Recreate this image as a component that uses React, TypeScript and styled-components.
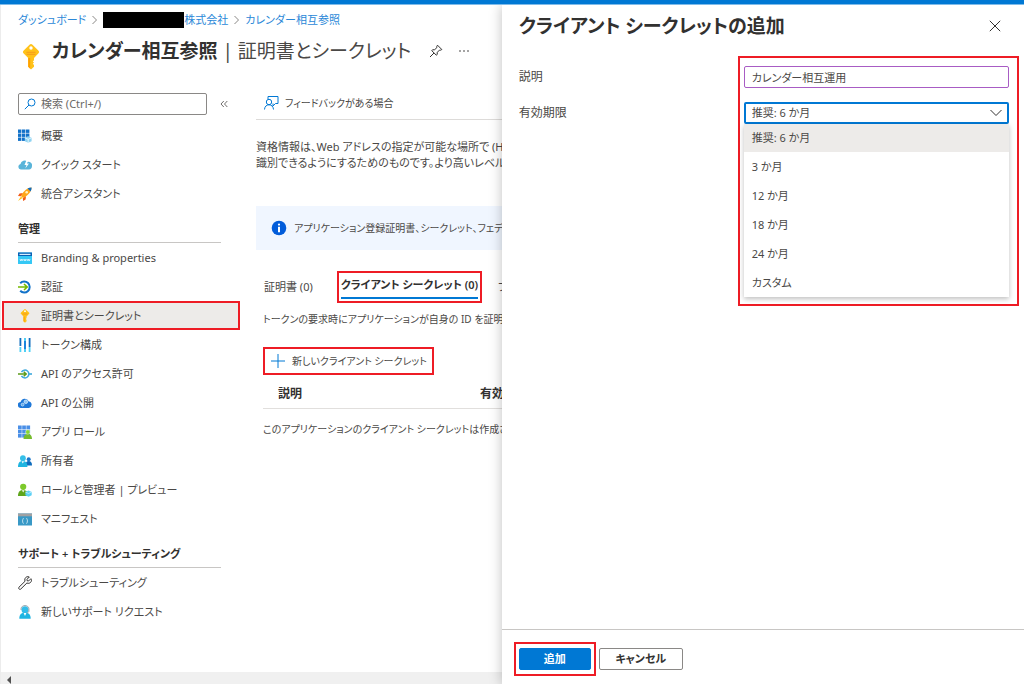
import React from "react";
import styled, { createGlobalStyle, css } from "styled-components";

const GlobalStyle = createGlobalStyle`
  *, *::before, *::after { box-sizing: border-box; }
  body {
    margin: 0;
    background: #fff;
    color: #4a4846;
    font-family: "Noto Sans", "Noto Sans CJK JP", sans-serif;
    font-size: 11px;
    line-height: 16px;
    font-feature-settings: "palt";
  }
  button, input, select {
    font: inherit;
    font-feature-settings: inherit;
    color: inherit;
  }
  ul, ol { list-style: none; margin: 0; padding: 0; }
  h1, h2, h3, p { margin: 0; }
`;

const RED = "#ee1c25";
const BLUE = "#0078d4";

const frame = css`
  border: 2px solid ${RED};
`;

const Page = styled.div`
  display: flex;
  flex-direction: column;
  height: 100vh;
  overflow: hidden;
`;

const TopBar = styled.div`
  flex: none;
  height: 5px;
  background: ${BLUE};
  border-bottom: 1px solid #7fbbe9;
`;

const Split = styled.div`
  flex: 1;
  min-height: 0;
  display: grid;
  grid-template-columns: 49fr 51fr;
`;

/* ---------- blade ---------- */

const Blade = styled.main`
  min-width: 0;
  display: flex;
  flex-direction: column;
  overflow: hidden;
  white-space: nowrap;
  border-left: 1px solid #ececec;
`;

const Breadcrumb = styled.nav`
  padding: 7px 0 0 17px;
  ol { display: flex; align-items: center; gap: 5px; }
  li { display: flex; align-items: center; gap: 5px; }
  a { color: #2b88d8; text-decoration: none; display: flex; align-items: center; }
`;

const Redacted = styled.span`
  width: 81px;
  height: 16px;
  background: #000;
`;

const TitleRow = styled.header`
  display: flex;
  align-items: center;
  gap: 10px;
  height: 40px;
  padding: 5px 0 0 19px;
  > svg { margin-top: 12px; }
`;

const Title = styled.h1`
  font-size: 19px;
  line-height: 28px;
  font-weight: 400;
  strong { font-weight: 600; color: #323130; }
`;

const IconButton = styled.button`
  display: flex;
  align-items: center;
  justify-content: center;
  width: 20px;
  height: 20px;
  padding: 0;
  border: 0;
  background: none;
`;

const TitleActions = styled.div`
  display: flex;
  gap: 8px;
  margin-left: 5px;
`;

const BladeBody = styled.div`
  flex: 1;
  min-height: 0;
  display: flex;
  gap: 16px;
  padding-top: 25px;
`;

const Sidebar = styled.nav`
  flex: none;
  width: 239px;
  padding-left: 1px;
`;

const SearchRow = styled.div`
  display: flex;
  align-items: center;
  gap: 7px;
  padding-left: 16px;
  margin-bottom: 6px;
`;

const SearchBox = styled.label`
  display: flex;
  align-items: center;
  gap: 5px;
  width: 189px;
  height: 22px;
  padding: 0 5px;
  border: 1px solid #8a8886;
  border-radius: 2px;
  input {
    flex: 1;
    min-width: 0;
    padding: 0;
    border: 0;
    outline: 0;
    background: none;
  }
  input::placeholder { color: #6b6967; opacity: 1; }
`;

const NavItem = styled.a<{ $selected?: boolean }>`
  display: flex;
  align-items: center;
  gap: 9px;
  height: 29px;
  padding-left: 16px;
  color: inherit;
  text-decoration: none;
  ${(p) =>
    p.$selected &&
    css`
      ${frame}
      background: #edebe9;
      padding-left: 14px;
    `}
  svg { flex: none; }
`;

const NavHeading = styled.h2`
  height: 35px;
  margin: 0 19px 0 16px;
  padding-top: 13px;
  border-bottom: 1px solid #c8c6c4;
  font-size: 11px;
  line-height: 16px;
  font-weight: 600;
  color: #323130;
`;

const Content = styled.section`
  flex: 1 0 480px;
`;

const CommandBar = styled.div`
  display: flex;
  align-items: center;
  height: 27px;
  padding: 0 0 6px 7px;
  border-bottom: 1px solid #dddbd9;
`;

const Command = styled.button`
  display: flex;
  align-items: center;
  gap: 6px;
  height: 20px;
  padding: 0;
  border: 0;
  background: none;
  font-size: 10px;
`;

const Intro = styled.p`
  padding-top: 19px;
`;

const InfoBanner = styled.div`
  display: flex;
  align-items: center;
  gap: 7px;
  height: 44px;
  margin: 35px 0 21px;
  padding-left: 15px;
  background: #f0f6ff;
  font-size: 10px;
`;

const Tabs = styled.div`
  display: flex;
  align-items: center;
  gap: 16px;
  padding-left: 8px;
`;

const Tab = styled.button<{ $active?: boolean }>`
  height: 28px;
  padding: 0;
  border: 0;
  background: none;
  ${(p) =>
    p.$active &&
    css`
      height: 26px;
      border-bottom: 2px solid ${BLUE};
      font-weight: 600;
      color: #323130;
    `}
`;

const TabFrame = styled.div`
  ${frame}
  height: 32px;
  margin-left: 8px;
  padding: 0 2px;
`;

const TabPanel = styled.div`
  padding: 8px 0 0 7px;
  font-size: 10px;
`;

const AddCommand = styled(Command)`
  ${frame}
  height: 28px;
  margin: 20px 0 6px;
  padding: 0 5px;
`;

const SecretTable = styled.table`
  width: 100%;
  border-collapse: collapse;
  text-align: left;
  th {
    height: 27px;
    padding: 0 0 0 15px;
    border-bottom: 1px solid #e1dfdd;
    font-size: 12px;
    font-weight: 600;
    color: #323130;
  }
  th:first-child { width: 202px; }
  td { height: 42px; padding: 0; }
`;

const ScrollTrack = styled.div`
  flex: none;
  display: flex;
  align-items: center;
  height: 12px;
  padding: 3px 0 0 5px;
  background: #f0f0f0;
`;

/* ---------- context pane ---------- */

const Pane = styled.aside`
  position: relative;
  min-width: 0;
  display: flex;
  flex-direction: column;
  background: #fff;
  box-shadow: 0 0 12px rgba(0, 0, 0, 0.25);
  clip-path: inset(0 0 0 -16px);
`;

const PaneHeader = styled.header`
  display: flex;
  align-items: center;
  justify-content: space-between;
  height: 41px;
  padding: 0 19px 0 17px;
  h2 {
    font-size: 19px;
    line-height: 28px;
    font-weight: 600;
    color: #323130;
  }
`;

const Form = styled.form`
  flex: 1;
  display: grid;
  grid-template-columns: 225px 1fr;
  grid-template-rows: 22px 22px auto;
  row-gap: 14px;
  padding: 20px 15px 0 17px;
`;

const FormLabel = styled.label<{ $row: number }>`
  grid-area: ${(p) => p.$row} / 1;
  font-size: 12px;
  line-height: 22px;
`;

const TextField = styled.input`
  grid-area: 1 / 2;
  width: 100%;
  height: 22px;
  padding: 0 7px;
  border: 1px solid #a85cc4;
  border-radius: 2px;
  outline: 0;
`;

const SelectWrap = styled.div`
  grid-area: 2 / 2;
  position: relative;
  height: 22px;
`;

const SelectField = styled.div`
  height: 22px;
  display: grid;
  align-items: center;
  select, svg { grid-area: 1 / 1; }
  svg { justify-self: end; margin-right: 7px; pointer-events: none; }
  select {
    appearance: none;
    width: 100%;
    height: 22px;
    padding: 0 6px;
    border: 2px solid ${BLUE};
    border-radius: 2px;
    background: #fff;
    outline: 0;
  }
`;

const Options = styled.ul`
  position: absolute;
  top: 100%;
  left: 0;
  right: 0;
  background: #fff;
  box-shadow: 0 2px 5px rgba(0, 0, 0, 0.25);
`;

const Option = styled.li`
  padding: 0 8px;
  line-height: 29px;
  &[aria-selected="true"] {
    background: #edebe9;
    line-height: 28px;
  }
`;

const FieldFrame = styled.div`
  ${frame}
  grid-area: 1 / 2 / 4 / 3;
  height: 250px;
  margin: -10px -10px 0 -6px;
  pointer-events: none;
`;

const PaneFooter = styled.footer`
  display: flex;
  align-items: center;
  gap: 3px;
  height: 55px;
  padding: 3px 12px 0;
  border-top: 1px solid #c8c6c4;
`;

const ButtonFrame = styled.div`
  ${frame}
  display: flex;
  padding: 4px 3px;
`;

const Button = styled.button<{ $primary?: boolean }>`
  min-width: ${(p) => (p.$primary ? 72 : 84)}px;
  height: 22px;
  padding: 0 8px;
  line-height: 16px;
  font-weight: 600;
  border-radius: 2px;
  border: 1px solid ${(p) => (p.$primary ? BLUE : "#8a8886")};
  background: ${(p) => (p.$primary ? BLUE : "#fff")};
  color: ${(p) => (p.$primary ? "#fff" : "#323130")};
`;

/* ---------- icons ---------- */

const Svg = ({ s = 14, h, children }: { s?: number; h?: number; children: React.ReactNode }) => (
  <svg width={s} height={h ?? s} viewBox={`0 0 ${s} ${h ?? s}`} fill="none" aria-hidden="true">
    {children}
  </svg>
);

const Chevron = () => (
  <Svg s={7} h={10}>
    <path d="M1.5 1 5.500 5l-4 4" stroke="#8a8886" />
  </Svg>
);

const KeyIcon = ({ w, h }: { w: number; h: number }) => (
  <svg width={w} height={h} viewBox="0 0 22 26" fill="none" aria-hidden="true">
    <path d="M9.500.8a2.200 2.200 0 0 1 3 0l5.800 5.600a2.200 2.200 0 0 1 0 3.100L14 13.900v2.300l-1.200 1.200 1.200 1.200-1.200 1.200 1.200 1.200v1.700L11 25.600l-2.800-2.900v-8.800L3.700 9.500a2.200 2.200 0 0 1 0-3.100z" fill="#ffc21a" />
    <path d="M8.200 14h2v10.700l-2-2z" fill="#ffa200" />
    <path d="M6.500 8.300h9M6.500 10.300h9" stroke="#f59a1c" />
    <circle cx="11" cy="4" r="1.700" fill="#fff" />
  </svg>
);

const OverviewIcon = () => (
  <Svg>
    {[0, 4, 8].map((x) =>
      [0.5, 4.5, 8.5].map((y) => (
        <rect key={`${x}-${y}`} x={x} y={y} width="3.400" height="3.400" fill="#1272c9" />
      ))
    )}
    <path d="M10.200 7.300 13.600 8.800v3.400l-3.400 1.500-3.400-1.500V8.800z" fill="#8fd3f2" />
    <path d="M6.800 8.800l3.400 1.500 3.400-1.500M10.200 10.300v3.400" stroke="#fff" strokeWidth=".7" />
  </Svg>
);

const QuickIcon = () => (
  <Svg>
    <path d="M2.800 11.500A2.800 2.800 0 0 1 2.500 6 4 4 0 0 1 9.500 4 3.500 3.500 0 0 1 14 8c0 2-1.300 3.500-3 3.500z" fill="#59b4d9" />
    <path d="M8.500 2 6.500 7h2L7.300 10.500 11 5.600H9L10.500 2z" fill="#fff" />
  </Svg>
);

const RocketIcon = () => (
  <Svg>
    <path d="M5 6 1.500 6.500 0 9l3 .3zM8 9l-.4 3.500-2.500 1.500-.3-3z" fill="#f25c1a" />
    <path d="M13.600.5C9 .8 5.500 4 3 9l2 2c5-2.500 8.300-6 8.600-10.500z" fill="#ffa61a" />
    <path d="M3 9.500 0 14l4.500-3z" fill="#ffc21a" />
    <path d="M13.600.5c-1.600 0-3 .4-4.100 1l3.100 3.100c.6-1.200 1-2.500 1-4.100z" fill="#0f6cbd" />
    <circle cx="8.700" cy="5.300" r="1.300" fill="#fff2c4" />
  </Svg>
);

const BrandingIcon = () => (
  <Svg>
    <rect y="1.500" width="14" height="11.500" rx=".5" fill="#35c8f5" />
    <path d="M0 1.500h14V5H0z" fill="#0a62b5" />
    <path d="M1.500 2.800h11v1.200h-11z" fill="#d7ecfb" />
    <path d="M2 8l.7 2 .7-2 .7 2 .7-2M5.600 8l.7 2 .7-2 .7 2 .7-2M9.200 8l.7 2 .7-2 .7 2 .7-2" stroke="#fff" strokeWidth=".6" />
  </Svg>
);

const AuthIcon = () => (
  <Svg>
    <path d="M2.200 3.200A5.500 5.500 0 1 1 2.200 10.800" stroke="#1272c9" strokeWidth="2" />
    <path d="M0 7h8.500M6 4l3.200 3L6 10" stroke="#76b900" strokeWidth="1.600" />
  </Svg>
);

const TokenIcon = () => (
  <Svg>
    <rect x="1.500" y="0" width="1.800" height="8" fill="#0f6cbd" />
    <rect x="1.500" y="9" width="1.800" height="5" fill="#4fd0f5" />
    <rect x="6" y="0" width="2" height="3.500" fill="#4fd0f5" />
    <rect x="6" y="3" width="2" height="8" fill="#1b84dd" />
    <rect x="6" y="11" width="2" height="3" fill="#4fd0f5" />
    <rect x="10.700" y="0" width="1.800" height="9" fill="#0f6cbd" />
    <rect x="10.700" y="9" width="1.800" height="5" fill="#4fd0f5" />
  </Svg>
);

const ApiPermIcon = () => (
  <Svg>
    <path d="M3.500 5.200a3.900 3.900 0 1 1 0 3.600" stroke="#3fa9dd" strokeWidth="1.500" />
    <path d="M11 7h3" stroke="#3fa9dd" strokeWidth="1.600" />
    <path d="M0 7h7.500M5.700 4.800 8.200 7 5.700 9.200" stroke="#5b9a1a" strokeWidth="1.500" />
  </Svg>
);

const ApiCloudIcon = () => (
  <Svg>
    <path d="M3 12A3 3 0 0 1 2.600 6 4.300 4.300 0 0 1 10.800 5.500 3.300 3.300 0 0 1 11 12z" fill="#1f78d8" />
    <circle cx="7.800" cy="5.800" r="1.800" fill="#8fc6f5" stroke="#e5f3fd" strokeWidth=".7" />
    <circle cx="4.600" cy="8.600" r="1.400" fill="#5aa7ea" stroke="#e5f3fd" strokeWidth=".7" />
  </Svg>
);

const AppRoleIcon = () => (
  <Svg>
    {[0, 4.2, 8.4].map((x) =>
      [0.5, 4.7, 8.9].map((y) => (
        <rect key={`${x}-${y}`} x={x} y={y} width="3.700" height="3.700" fill="#4a8fe7" />
      ))
    )}
    <path d="M5.500 14c0-3.500 1.700-5 4.300-5s4.200 1.500 4.200 5z" fill="#76bc2d" />
    <circle cx="9.800" cy="7" r="2.200" fill="#86d633" stroke="#fff" strokeWidth=".4" />
  </Svg>
);

const OwnersIcon = () => (
  <Svg>
    <path d="M7.500 11.500c0-3 1-4.500 3.200-4.500S14 8.500 14 11.500z" fill="#0f6cbd" />
    <circle cx="10.700" cy="5.300" r="2" fill="#1a78cc" />
    <path d="M0 13c0-4 1.500-6 4.700-6s4.700 2 4.700 6z" fill="#1fb4e0" />
    <circle cx="4.900" cy="4.200" r="2.900" fill="#35bfe8" />
    <path d="M3.600 7.200h2.400L4.800 9.500z" fill="#fff" />
  </Svg>
);

const RolesIcon = () => (
  <Svg>
    <path d="M0 13c0-4 1.800-6 5-6s5 2 5 6z" fill="#5ea51c" />
    <circle cx="5.200" cy="3.800" r="3.100" fill="#7cc92a" />
    <path d="M3.900 7.200h2.500L5.200 9.500z" fill="#fff" />
    <path d="M10.500 7.500 13.700 9v3.300l-3.200 1.500-3.100-1.500V9z" fill="#5cd0f5" />
    <path d="M7.400 9l3.100 1.400L13.700 9" stroke="#d3f2fd" strokeWidth=".7" />
  </Svg>
);

const ManifestIcon = () => (
  <Svg>
    <path d="M0 1.500h14v12H0z" fill="#3999c6" />
    <path d="M0 1.500h14v2.800H0z" fill="#a0a1a2" />
    <path d="M5.600 6.500c-1 0-.8.600-.8 1.300s-.2 1-.7 1.100c.5.100.7.500.7 1.200s-.2 1.300.8 1.300M8.400 6.500c1 0 .8.600.8 1.300s.2 1 .7 1.100c-.5.100-.7.500-.7 1.200s.2 1.300-.8 1.300" stroke="#e5f3fa" strokeWidth=".8" />
  </Svg>
);

const WrenchIcon = () => (
  <Svg>
    <path d="M12.900 2.700 10.700 4.900 9.200 4.800 9 3.300 11.300 1C9.500.2 7.600 1 7 2.600c-.4 1-.2 2 .1 2.600L.9 11.300c-1 1 .8 2.800 1.800 1.800L8.900 7c1.700.8 3.600.1 4.300-1.500.4-1 .3-2-.3-2.800z" stroke="#323130" strokeLinejoin="round" />
  </Svg>
);

const SupportIcon = () => (
  <Svg>
    <path d="M1.300 13.800c0-4.200 1.900-6.300 5.700-6.300s5.700 2.100 5.700 6.300z" fill="#1eb5e2" />
    <circle cx="7" cy="4.800" r="3.500" fill="#32bdea" />
    <path d="M3.100 5V3.500C3.400 1.600 5 .6 7 .6s3.600 1 3.900 3V6c0 1.200-1 1.700-2 1.900" stroke="#8a9aa3" strokeWidth=".9" />
    <path d="M5.600 8h2.800L7 11z" fill="#fff" />
  </Svg>
);

const FeedbackIcon = () => (
  <Svg s={16}>
    <path d="M5 4V1.500h10v7h-2.500L10 11V8.500" stroke={BLUE} />
    <circle cx="6" cy="7" r="2.700" stroke={BLUE} />
    <path d="M1.500 14.500C1.700 11.500 3.500 9.800 6 9.800s4.300 1.700 4.500 4.700" stroke={BLUE} />
  </Svg>
);

const general = [
  { icon: <OverviewIcon />, label: "概要" },
  { icon: <QuickIcon />, label: "クイック スタート" },
  { icon: <RocketIcon />, label: "統合アシスタント" },
];

const manage = [
  { icon: <BrandingIcon />, label: "Branding & properties" },
  { icon: <AuthIcon />, label: "認証" },
  { icon: <KeyIcon w={14} h={14} />, label: "証明書とシークレット", selected: true },
  { icon: <TokenIcon />, label: "トークン構成" },
  { icon: <ApiPermIcon />, label: "API のアクセス許可" },
  { icon: <ApiCloudIcon />, label: "API の公開" },
  { icon: <AppRoleIcon />, label: "アプリ ロール" },
  { icon: <OwnersIcon />, label: "所有者" },
  { icon: <RolesIcon />, label: "ロールと管理者 | プレビュー" },
  { icon: <ManifestIcon />, label: "マニフェスト" },
];

const support = [
  { icon: <WrenchIcon />, label: "トラブルシューティング" },
  { icon: <SupportIcon />, label: "新しいサポート リクエスト" },
];

type Item = { icon: React.ReactNode; label: string; selected?: boolean };

const NavList = ({ items }: { items: Item[] }) => (
  <ul>
    {items.map((it) => (
      <li key={it.label}>
        <NavItem href="#" $selected={it.selected} aria-current={it.selected ? "page" : undefined}>
          {it.icon}
          {it.label}
        </NavItem>
      </li>
    ))}
  </ul>
);

const terms = ["推奨: 6 か月", "3 か月", "12 か月", "18 か月", "24 か月", "カスタム"];

export default function App() {
  return (
    <Page>
      <GlobalStyle />
      <TopBar />
      <Split>
        <Blade>
          <Breadcrumb>
            <ol>
              <li><a href="#">ダッシュボード</a><Chevron /></li>
              <li><a href="#"><Redacted />株式会社</a><Chevron /></li>
              <li><a href="#">カレンダー相互参照</a></li>
            </ol>
          </Breadcrumb>
          <TitleRow>
            <KeyIcon w={22} h={26} />
            <Title><strong>カレンダー相互参照</strong> | 証明書とシークレット</Title>
            <TitleActions>
              <IconButton aria-label="ピン留め">
                <Svg>
                  <path d="M8.500 1.200 12.800 5.500 11.700 6.200 10.600 6 8.300 8.300 8.200 10.500 7.300 11.200 2.800 6.700 3.500 5.800 5.700 5.700 8 3.400 7.800 2.300zM5 9 1 13" stroke="#323130" strokeLinejoin="round" />
                </Svg>
              </IconButton>
              <IconButton aria-label="その他">
                <Svg>
                  <circle cx="3" cy="7" r=".8" fill="#323130" />
                  <circle cx="7" cy="7" r=".8" fill="#323130" />
                  <circle cx="11" cy="7" r=".8" fill="#323130" />
                </Svg>
              </IconButton>
            </TitleActions>
          </TitleRow>
          <BladeBody>
            <Sidebar>
              <SearchRow>
                <SearchBox>
                  <Svg s={12}>
                    <circle cx="7.500" cy="4.500" r="3.500" stroke={BLUE} />
                    <path d="M5 7 .8 11.200" stroke={BLUE} />
                  </Svg>
                  <input type="search" placeholder="検索 (Ctrl+/)" aria-label="検索" />
                </SearchBox>
                <IconButton aria-label="折りたたむ">
                  <Svg s={8}>
                    <path d="M3.800 1 1 4l2.800 3M7.300 1 4.500 4l2.800 3" stroke="#605e5c" strokeWidth=".9" />
                  </Svg>
                </IconButton>
              </SearchRow>
              <NavList items={general} />
              <NavHeading>管理</NavHeading>
              <NavList items={manage} />
              <NavHeading>サポート + トラブルシューティング</NavHeading>
              <NavList items={support} />
            </Sidebar>
            <Content>
              <CommandBar>
                <Command><FeedbackIcon />フィードバックがある場合</Command>
              </CommandBar>
              <Intro>
                資格情報は、Web アドレスの指定が可能な場所で (HT
                <br />
                識別できるようにするためのものです。より高いレベルで使
              </Intro>
              <InfoBanner>
                <Svg s={16}>
                  <circle cx="8" cy="8" r="7.300" fill="#015cda" />
                  <circle cx="8" cy="4.600" r="1.100" fill="#fff" />
                  <path d="M7 6.700h2v5.500H7z" fill="#fff" />
                </Svg>
                アプリケーション登録証明書、シークレット、フェデレー
              </InfoBanner>
              <Tabs role="tablist">
                <Tab role="tab">証明書 (0)</Tab>
                <TabFrame>
                  <Tab role="tab" aria-selected $active>クライアント シークレット (0)</Tab>
                </TabFrame>
                <Tab role="tab">フ</Tab>
              </Tabs>
              <TabPanel role="tabpanel">
                <p>トークンの要求時にアプリケーションが自身の ID を証明</p>
                <AddCommand>
                  <Svg s={16}>
                    <path d="M8 1v14M1 8h14" stroke={BLUE} />
                  </Svg>
                  新しいクライアント シークレット
                </AddCommand>
                <SecretTable>
                  <thead>
                    <tr><th>説明</th><th>有効期限</th></tr>
                  </thead>
                  <tbody>
                    <tr><td colSpan={2}>このアプリケーションのクライアント シークレットは作成さ</td></tr>
                  </tbody>
                </SecretTable>
              </TabPanel>
            </Content>
          </BladeBody>
          <ScrollTrack>
            <Svg s={6} h={8}>
              <path d="M5 0v8L1 4z" fill="#505050" />
            </Svg>
          </ScrollTrack>
        </Blade>
        <Pane>
          <PaneHeader>
            <h2>クライアント シークレットの追加</h2>
            <IconButton aria-label="閉じる">
              <Svg s={12}>
                <path d="M.8.8l10.400 10.400M11.200.8.800 11.200" stroke="#323130" />
              </Svg>
            </IconButton>
          </PaneHeader>
          <Form>
            <FormLabel $row={1} htmlFor="description">説明</FormLabel>
            <TextField id="description" defaultValue="カレンダー相互運用" />
            <FormLabel $row={2} htmlFor="expires">有効期限</FormLabel>
            <SelectWrap>
              <SelectField>
                <select id="expires" defaultValue={terms[0]}>
                  {terms.map((t) => <option key={t}>{t}</option>)}
                </select>
                <Svg s={12} h={8}>
                  <path d="M.5 1 6 6.500 11.500 1" stroke="#323130" />
                </Svg>
              </SelectField>
              <Options role="listbox" aria-label="有効期限">
                {terms.map((t, i) => (
                  <Option key={t} role="option" aria-selected={i === 0}>{t}</Option>
                ))}
              </Options>
            </SelectWrap>
            <FieldFrame />
          </Form>
          <PaneFooter>
            <ButtonFrame>
              <Button $primary>追加</Button>
            </ButtonFrame>
            <Button>キャンセル</Button>
          </PaneFooter>
        </Pane>
      </Split>
    </Page>
  );
}
